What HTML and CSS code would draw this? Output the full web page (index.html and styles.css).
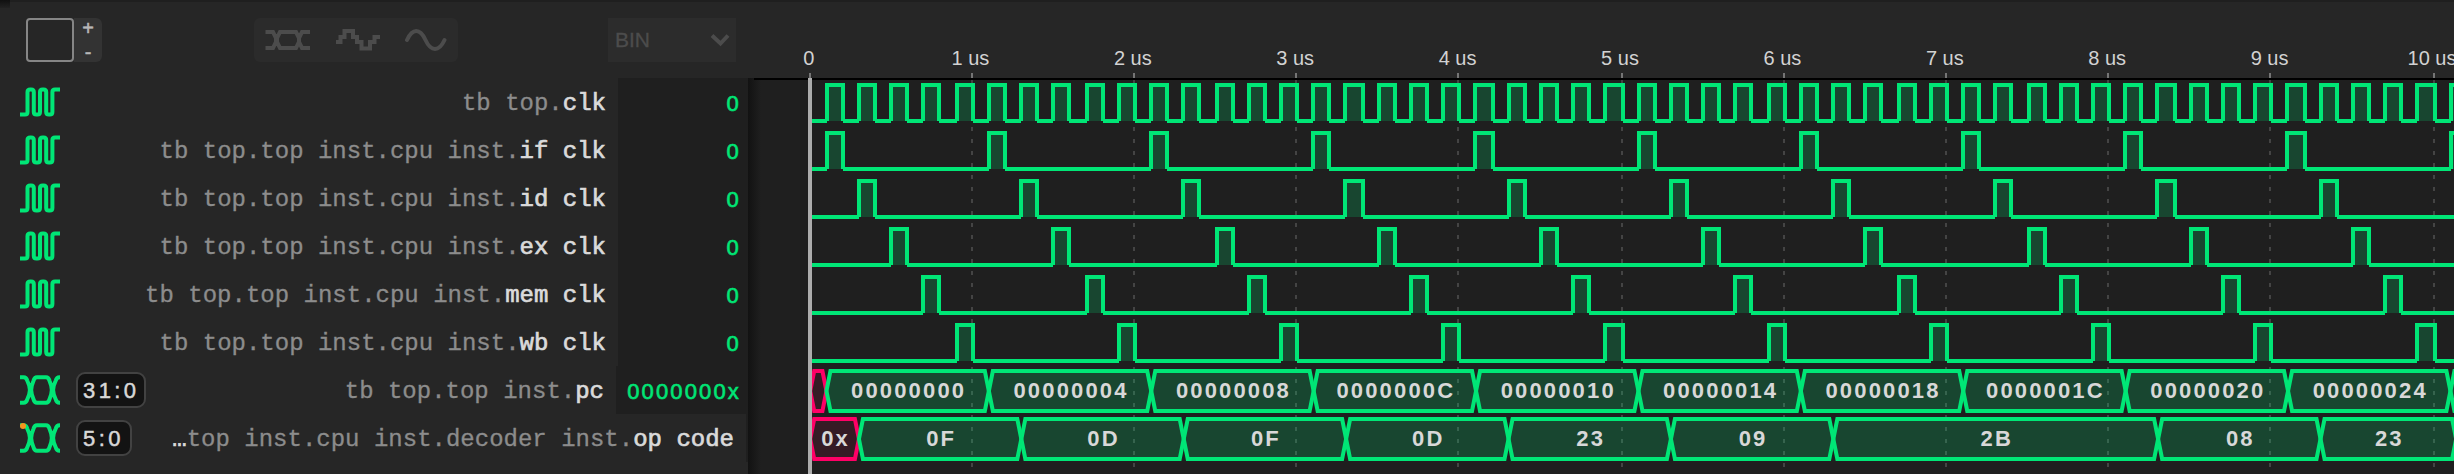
FILE: index.html
```html
<!DOCTYPE html>
<html lang="en">
<head>
<meta charset="utf-8">
<title>Waveform viewer</title>
<link rel="stylesheet" href="styles.css">
</head>
<body>
<svg width="0" height="0" class="defs">
  <symbol id="wave" viewBox="0 0 40 30"><path d="M0 27.6H5Q7.5 27.6 7.5 25V5Q7.5 2.4 10.2 2.4H11.2Q13.8 2.4 13.8 5V25Q13.8 27.6 16.4 27.6H17.4Q20 27.6 20 25V5Q20 2.4 22.6 2.4H23.6Q26.2 2.4 26.2 5V25Q26.2 27.6 28.8 27.6H29.8Q32.4 27.6 32.4 25V5Q32.4 2.4 35 2.4H40"/></symbol>
  <symbol id="bus" viewBox="0 0 40 30"><path d="M0 2.2H3.500Q6.400 2.200 7.200 5.500C10.800 13 10.800 17 7.200 24.500Q6.400 27.800 3.500 27.800H0M40 2.200H39.500Q36.600 2.200 35.800 5.500C32.200 13 32.200 17 35.800 24.500Q36.600 27.800 39.500 27.800H40M17 2.200H26Q28.600 2.200 29.400 5.500C32.600 13 32.600 17 29.400 24.500Q28.600 27.800 26 27.800H17Q14.400 27.800 13.600 24.500C10.400 17 10.400 13 13.600 5.500Q14.400 2.200 17 2.200Z"/></symbol>
</svg>
<div class="viewer">
  <header class="toolbar">
    <div class="swatch-group"><div class="swatch"></div><div class="stepper"><span>+</span><span>-</span></div></div>
    <div class="modes">
      <svg width="46" height="24" viewBox="0 0 46 24"><path d="M.5 4H8L11 10V14L8 20H.5M45 4H37L34 10V14L37 20H45M15 4H31L34 10V14L31 20H15L12 14V10Z"/></svg>
      <svg width="46" height="24" viewBox="0 0 46 24"><path d="M1 14H5.500V9H9.500V3H18V9H22V14H26.500V20.500H35V14H39.500V9H45"/></svg>
      <svg width="42" height="24" viewBox="0 0 42 24"><path stroke-linecap="round" d="M2 12C7.500 0 15 0 20.500 12S34 24 39.500 12"/></svg>
    </div>
    <div class="format"><span>BIN</span><svg width="20" height="14" viewBox="0 0 20 14"><path d="M2 2.500L10.500 10.500L18 2.500"/></svg></div>
    <svg class="ruler" id="ruler" width="1706" height="78" viewBox="748 0 1706 78"></svg>
  </header>
  <main class="body">
    <div class="names" id="names"></div>
    <div class="canvas" id="canvas">
      <svg class="grid" id="grid" width="1706" height="396" viewBox="748 78 1706 396"></svg>
      <div class="shade"></div>
    </div>
  </main>
  <div class="corner"></div>
</div>
<script src="app.js"></script>
</body>
</html>
```
FILE: styles.css
```css
* { box-sizing: border-box; }
body { margin: 0; background: #262626; }
.defs { position: absolute; }
.viewer {
  position: relative;
  width: 2454px;
  height: 474px;
  overflow: hidden;
  font-family: "Liberation Sans", Arial, sans-serif;
}
.corner { position: absolute; left: 0; top: 0; width: 10px; height: 8px; background: linear-gradient(#101010, #222); }

.toolbar {
  display: flex;
  align-items: flex-start;
  height: 78px;
  border-top: 2px solid #1f1f1f;
  background: #262626;
}
.swatch-group { display: flex; margin: 16px 152px 0 26px; height: 44px; }
.swatch { width: 48px; border: 2px solid #868686; border-radius: 4px; }
.stepper {
  width: 28px;
  display: flex;
  flex-direction: column;
  align-items: center;
  justify-content: space-between;
  background: #333;
  border-radius: 0 6px 6px 0;
  color: #b8b8b8;
  font-size: 20px;
  line-height: 20px;
  -webkit-text-stroke: .5px #b8b8b8;
}
.modes {
  display: flex;
  align-items: center;
  width: 204px;
  height: 44px;
  margin: 16px 150px 0 0;
  padding: 0 11px;
  justify-content: space-between;
  background: #2b2b2b;
  border-radius: 6px;
}
.modes svg, .format svg { fill: none; stroke: #4c4c4c; stroke-width: 4; }
.format {
  display: flex;
  align-items: center;
  justify-content: space-between;
  width: 128px;
  height: 44px;
  margin: 16px 12px 0 0;
  padding: 0 6px 0 7px;
  background: #2c2c2c;
  color: #4c4c4c;
  font-size: 21px;
  -webkit-text-stroke: .3px #4c4c4c;
}
.ruler { display: block; margin-top: -2px; flex: none; }
.ruler text { fill: #d2d2d2; font-size: 20px; text-anchor: middle; }
.ruler rect { fill: #757575; }

.body { display: flex; height: 396px; }
.names { width: 748px; background: #262626; }
.row { display: flex; align-items: center; height: 48px; padding-left: 20px; }
.icon { width: 40px; height: 30px; flex: none; fill: none; stroke: #00e676; stroke-width: 4; }
.icon-box { position: relative; display: flex; }
.dot { position: absolute; left: 0; top: 0; width: 6px; height: 6px; border-radius: 50%; background: #f7931e; }
.badge {
  margin-left: 16px;
  height: 36px;
  padding: 0 0 0 5px;
  border: 2px solid #424242;
  border-radius: 9px;
  background: #131313;
  color: #d8d8d8;
  font: 22px/34px "Liberation Sans", Arial, sans-serif;
  letter-spacing: 3.4px;
  -webkit-text-stroke: .5px #d8d8d8;
}
.wide { width: 70px; }
.slim { width: 56px; }
.name {
  flex: 1;
  padding: 3px 12px 0 0;
  text-align: right;
  white-space: pre;
  color: #8c8c8c;
  font: 24px/45px "Liberation Mono", "Courier New", monospace;
  -webkit-text-stroke: .3px;
}
.name b { font-weight: 400; color: #dadada; -webkit-text-stroke: .7px #dadada; }
.value {
  width: 130px;
  height: 48px;
  padding: 3px 7px 0 0;
  text-align: right;
  background: #1f1f1f;
  color: #00e676;
  font: 22px/45px "Liberation Sans", Arial, sans-serif;
  letter-spacing: 2.15px;
  -webkit-text-stroke: .6px #00e676;
}
.value-bus { width: 132px; }
.value-none { width: 2px; padding: 0; }

.canvas { position: relative; width: 1706px; background: #1f1f1f; }
.grid { position: absolute; left: 0; top: 0; }
.grid line { stroke: #444; stroke-width: 2; stroke-dasharray: 4 8; }
.track { position: relative; display: block; height: 48px; }
.line { fill: none; stroke: #00e676; stroke-width: 4; }
.fill { fill: rgba(0, 230, 118, .2); }
.seg { fill: rgba(0, 230, 118, .2); stroke: #00e676; stroke-width: 4; }
.seg-x { fill: rgba(255, 0, 102, .1); stroke: #ff0066; stroke-width: 4; }
.track text {
  fill: #d8d8d8;
  font: bold 22px "Liberation Sans", Arial, sans-serif;
  letter-spacing: 2.15px;
  text-anchor: middle;
}
.shade {
  position: absolute; left: 0; top: 0; width: 13px; height: 396px;
  background: linear-gradient(90deg, rgba(0,0,0,.42), rgba(0,0,0,0));
}
.topline { position: absolute; left: 6px; top: 0; right: 0; height: 2px; background: #000; }
.cursor { position: absolute; left: 60px; top: 0; width: 4px; height: 396px; background: #adadad; }
```
FILE: app.js
```js
const ORIGIN = 810, US = 162.4, END = 2454;
const snap = t => 2 * Math.floor(405 + 81.2 * t + 1e-6) + 1;
const pulses = (first, step) => {
  const out = [];
  for (let t = first; t < 10.2; t += step) out.push(t);
  return out;
};
const path = 'tb top.top inst.cpu inst.';
const signals = [
  { scope: 'tb top.', name: 'clk', value: '0', pulses: pulses(0.1, 0.2) },
  { scope: path, name: 'if clk', value: '0', pulses: pulses(0.1, 1) },
  { scope: path, name: 'id clk', value: '0', pulses: pulses(0.3, 1) },
  { scope: path, name: 'ex clk', value: '0', pulses: pulses(0.5, 1) },
  { scope: path, name: 'mem clk', value: '0', pulses: pulses(0.7, 1) },
  { scope: path, name: 'wb clk', value: '0', pulses: pulses(0.9, 1) },
  { scope: 'tb top.top inst.', name: 'pc', value: '0000000x', range: '31:0', size: 'wide',
    times: [0, 0.1, 1.1, 2.1, 3.1, 4.1, 5.1, 6.1, 7.1, 8.1, 9.1, 10.1, 11.1],
    words: ['', '00000000', '00000004', '00000008', '0000000C', '00000010', '00000014', '00000018', '0000001C', '00000020', '00000024', ''] },
  { scope: '<b>…</b>top inst.cpu inst.decoder inst.', name: 'op code', range: '5:0', size: 'slim', dot: true,
    times: [0, 0.3, 1.3, 2.3, 3.3, 4.3, 5.3, 6.3, 8.3, 9.3, 10.135],
    words: ['0x', '0F', '0D', '0F', '0D', '23', '09', '2B', '08', '23'] }
];

function clockTrack(s) {
  let line = '', fill = '', x = ORIGIN;
  for (const t of s.pulses) {
    const a = snap(t), b = snap(t + 0.1);
    line += `M${x} 43H${a}M${a} 43V7H${b}V43`;
    fill += `M${a} 43V7H${b}V43Z`;
    x = b;
  }
  line += `M${x} 43H${Math.max(x, END)}`;
  return `<g shape-rendering="crispEdges"><path class="fill" d="${fill}"/><path class="line" d="${line}"/></g>`;
}

function busTrack(s) {
  return s.words.map((w, i) => {
    const a = ORIGIN + US * s.times[i] + 0.2, b = ORIGIN + US * s.times[i + 1] + 0.2;
    const shape = `<path class="${i ? 'seg' : 'seg-x'}" d="M${a} 25L${a + 4} 5H${b - 4}L${b} 25L${b - 4} 45H${a + 4}Z"/>`;
    return shape + (w ? `<text x="${(a + b) / 2 + 1}" y="32">${w}</text>` : '');
  }).join('');
}

document.getElementById('names').innerHTML = signals.map(s => `
  <div class="row">
    <div class="icon-box"><svg class="icon"><use href="#${s.range ? 'bus' : 'wave'}"/></svg>${s.dot ? '<i class="dot"></i>' : ''}</div>
    ${s.range ? `<div class="badge ${s.size}">${s.range}</div>` : ''}
    <div class="name">${s.scope}<b>${s.name}</b></div>
    <div class="value ${s.range ? (s.value ? 'value-bus' : 'value-none') : ''}">${s.value || ''}</div>
  </div>`).join('');

let ticks = '', grid = '';
for (let t = 0; t <= 10; t++) {
  const x = snap(t) - 1;
  ticks += `<rect x="${x - 1}" y="73" width="2" height="5"/><text x="${t ? 808 + US * t : 808.8}" y="65">${t ? t + ' us' : 0}</text>`;
  if (t) grid += `<line x1="${x}" x2="${x}" y1="79" y2="468"/>`;
}
document.getElementById('ruler').innerHTML = ticks;
document.getElementById('grid').innerHTML = grid;
document.getElementById('canvas').insertAdjacentHTML('beforeend',
  '<div class="topline"></div>' + signals.map(s =>
    `<svg class="track" width="1706" height="48" viewBox="748 0 1706 48">${s.range ? busTrack(s) : clockTrack(s)}</svg>`).join('') +
  '<div class="cursor"></div>');
```
